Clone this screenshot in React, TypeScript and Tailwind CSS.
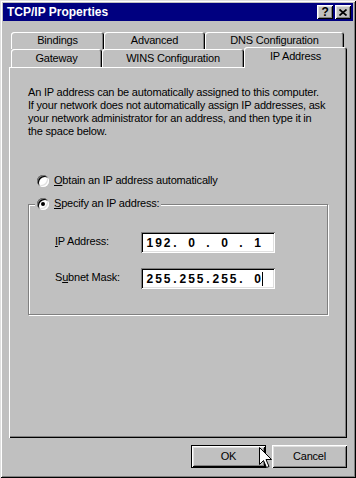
import React from 'react';

// Win95 palette: face #c0c0c0, light #dfdfdf, shadow #808080, dark #000
const raised =
  'shadow-[inset_1px_1px_0_#dfdfdf,inset_-1px_-1px_0_#000,inset_2px_2px_0_#fff,inset_-2px_-2px_0_#808080]';
const button =
  'shadow-[inset_1px_1px_0_#fff,inset_-1px_-1px_0_#000,inset_2px_2px_0_#dfdfdf,inset_-2px_-2px_0_#808080]';
const sunken =
  'shadow-[inset_1px_1px_0_#808080,inset_-1px_-1px_0_#fff,inset_2px_2px_0_#000,inset_-2px_-2px_0_#dfdfdf]';
const tab =
  'flex justify-center rounded-t-[3px] bg-[#c0c0c0] shadow-[inset_1px_1px_0_#fff,inset_-1px_0_0_#000,inset_-2px_0_0_#808080]';

function Radio({ checked }: { checked?: boolean }) {
  return (
    <span
      className={`flex h-[12px] w-[12px] shrink-0 items-center justify-center rounded-full bg-white ${sunken}`}
    >
      {checked && <span className="h-[4px] w-[4px] rounded-full bg-black" />}
    </span>
  );
}

function IpField({ parts, caret }: { parts: string[]; caret?: boolean }) {
  return (
    <div
      className={`flex h-[21px] w-[134px] items-center bg-white pl-[5px] ${sunken}`}
    >
      <div className="flex text-[12px] font-bold leading-[14px] tracking-[2px]">
        {parts.map((p, i) => (
          <React.Fragment key={i}>
            {i > 0 && <span className="w-[6px] text-center">.</span>}
            <span className="flex w-[27px] justify-center">
              <span className="relative">
                {p}
                {caret && i === parts.length - 1 && (
                  <span className="absolute right-[0px] top-0 h-[14px] w-px bg-black" />
                )}
              </span>
            </span>
          </React.Fragment>
        ))}
      </div>
    </div>
  );
}

function Cursor() {
  return (
    <svg
      className="absolute left-[259px] top-[447px]"
      width="13"
      height="22"
      viewBox="0 0 13 22"
    >
      <path
        d="M0.5 0.5 V17.5 L4.5 13.5 L7.5 20.5 L10 19.5 L7 12.5 H12.5 Z"
        fill="#fff"
        stroke="#000"
        strokeWidth="1"
      />
    </svg>
  );
}

export default function App() {
  return (
    <div
      className={`relative flex h-[478px] w-[356px] flex-col bg-[#c0c0c0] p-[3px] font-['Liberation_Sans',Arial,sans-serif] text-[11px] tracking-[-0.2px] text-black ${raised}`}
    >
      {/* title bar */}
      <div className="flex h-[18px] items-center bg-[#000080] pl-[4px] pr-[2px]">
        <span className="flex-1 text-[12px] font-bold tracking-normal text-white">
          TCP/IP Properties
        </span>
        <span
          className={`flex h-[14px] w-[16px] items-center justify-center bg-[#c0c0c0] text-[12px] font-bold leading-none ${button}`}
        >
          ?
        </span>
        <span
          className={`ml-[2px] flex h-[14px] w-[16px] items-center justify-center bg-[#c0c0c0] ${button}`}
        >
          <svg width="8" height="7" viewBox="0 0 8 7">
            <path d="M0.5 0.5 L7.5 6.5 M7.5 0.5 L0.5 6.5" stroke="#000" strokeWidth="1.7" />
          </svg>
        </span>
      </div>

      <div className="flex flex-1 flex-col px-[6px] pt-[11px] pb-[7px]">
        {/* tabs, back row */}
        <div className="flex h-[17px] pl-[2px] leading-[13px]">
          <div className={`${tab} w-[93px] pt-[2px]`}>Bindings</div>
          <div className={`${tab} w-[101px] pt-[2px]`}>Advanced</div>
          <div className={`${tab} w-[139px] pt-[2px]`}>DNS Configuration</div>
        </div>
        {/* tabs, front row */}
        <div className="flex h-[18px] items-end pl-[2px] leading-[13px]">
          <div className={`${tab} h-[18px] w-[91px] pt-[3px]`}>Gateway</div>
          <div className={`${tab} h-[18px] w-[142px] pt-[3px]`}>WINS Configuration</div>
          <div className={`${tab} relative z-10 -mb-[1px] h-[21px] w-[103px] pt-[3px]`}>
            IP Address
          </div>
        </div>

        {/* page */}
        <div className="flex flex-1 flex-col pl-[19px] pt-[19px] shadow-[inset_1px_1px_0_#fff,inset_-1px_-1px_0_#000,inset_-2px_-2px_0_#808080]">
          <p className="leading-[13px]">
            An IP address can be automatically assigned to this computer.
            <br />
            If your network does not automatically assign IP addresses, ask
            <br />
            your network administrator for an address, and then type it in
            <br />
            the space below.
          </p>

          <div className="ml-[9px] mt-[36px] flex h-[13px] items-center gap-[5px] leading-[13px]">
            <Radio />
            <span>
              <span className="underline">O</span>btain an IP address automatically
            </span>
          </div>

          <div className="mt-[17px] flex w-[300px] flex-col border border-[#808080] pb-[25px] shadow-[inset_1px_1px_0_#fff,1px_1px_0_#fff]">
            <div className="-mt-[8px] ml-[6px] flex h-[13px] items-center gap-[5px] self-start bg-[#c0c0c0] px-[2px] leading-[13px]">
              <Radio checked />
              <span>
                <span className="underline">S</span>pecify an IP address:
              </span>
            </div>

            <div className="ml-[26px] mt-[22px] flex items-start leading-[13px]">
              <span className="w-[86px] pt-[3px]">
                <span className="underline">I</span>P Address:
              </span>
              <IpField parts={['192', '0', '0', '1']} />
            </div>
            <div className="ml-[26px] mt-[15px] flex items-start leading-[13px]">
              <span className="w-[86px] pt-[3px]">
                S<span className="underline">u</span>bnet Mask:
              </span>
              <IpField parts={['255', '255', '255', '0']} caret />
            </div>
          </div>
        </div>

        {/* buttons */}
        <div className="mt-[7px] flex justify-end gap-[6px] leading-[13px]">
          <div className="h-[23px] w-[75px] border border-black">
            <div className={`flex h-full items-center justify-center ${button}`}>OK</div>
          </div>
          <div className={`flex h-[23px] w-[75px] items-center justify-center ${button}`}>
            Cancel
          </div>
        </div>
      </div>

      <Cursor />
    </div>
  );
}
